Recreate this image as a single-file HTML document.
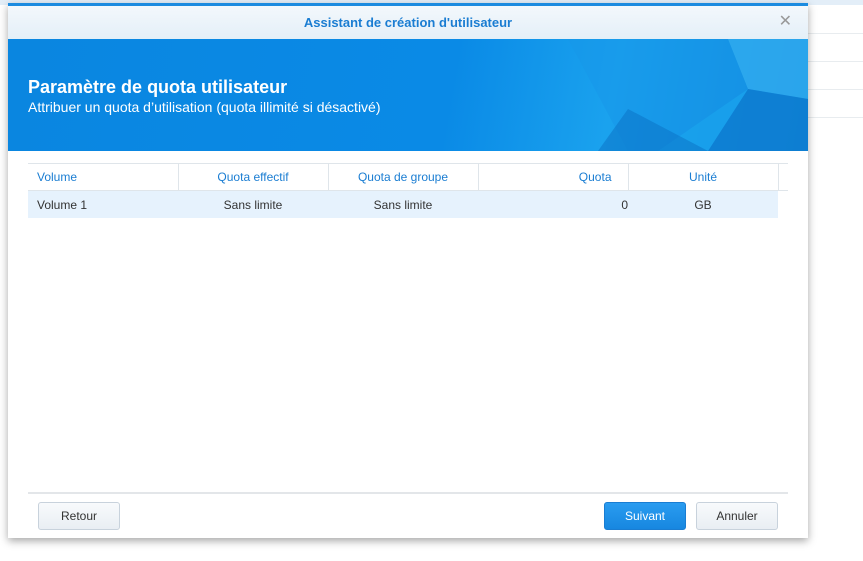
<!DOCTYPE html>
<html><head><style>
body{margin:0;width:863px;height:561px;background:#fff;position:relative;overflow:hidden;font-family:"Liberation Sans",sans-serif;}
.bgl{position:absolute;left:800px;right:0;height:1px;background:#e8ecef}
.dlg{position:absolute;left:8px;top:3px;width:800px;height:535px;background:#fff;box-shadow:0 3px 8px rgba(0,0,0,.35);border-top:3px solid #1b8be0;box-sizing:border-box}
.title{height:33px;background:linear-gradient(#f3f8fc,#e4eff8);text-align:center;line-height:33px;color:#1a7dd2;font-size:13px;font-weight:bold}
.x{position:absolute;right:16px;top:8px;color:#999;font-size:16px;line-height:16px}
.ban{height:112px;background:linear-gradient(100deg,#0a86e0 0%,#0a8ae6 55%,#1aa2ee 75%,#0d7fd6 100%);position:relative;overflow:hidden;color:#fff}
.ban h1{position:absolute;left:20px;top:38px;margin:0;font-size:18px}
.ban p{position:absolute;left:20px;top:60px;margin:0;font-size:14px}
table{position:absolute;left:20px;top:157px;width:760px;border-collapse:collapse;font-size:12px;table-layout:fixed}
th{color:#1a7dd2;font-weight:normal;height:26px;padding:0;border-top:1px solid #dfe5ea;border-right:1px solid #dfe5ea;border-bottom:1px solid #dfe5ea}
td{height:27px;padding:0;color:#333;background:#e6f2fd}
.btn{position:absolute;top:496px;height:28px;border:1px solid #c8d2dc;border-radius:3px;background:linear-gradient(#f8fafc,#e9eef3);font-size:12px;color:#333;text-align:center;line-height:26px;box-sizing:border-box}
</style></head><body>
<div style="position:absolute;left:0;right:0;top:0;height:5px;background:#e3eef8"></div>
<div class="bgl" style="top:33px"></div><div class="bgl" style="top:61px"></div><div class="bgl" style="top:89px"></div><div class="bgl" style="top:117px"></div>
<div class="dlg">
<div class="title">Assistant de création d'utilisateur</div>
<div class="x">✕</div>
<div class="ban">
<svg width="800" height="112" style="position:absolute;left:0;top:0">
<polygon points="560,0 800,0 800,112 620,112" fill="#1898ea" opacity=".6"/>
<polygon points="720,0 800,0 800,60 740,50" fill="#3ab4f2" opacity=".6"/>
<polygon points="740,50 800,60 800,112 700,112" fill="#0c78cc" opacity=".7"/>
<polygon points="740,50 650,112 700,112" fill="#1aa6ee" opacity=".6"/>
<polygon points="620,70 590,112 700,112" fill="#0a70c4" opacity=".5"/>
</svg>
<h1>Paramètre de quota utilisateur</h1>
<p>Attribuer un quota d’utilisation (quota illimité si désactivé)</p>
</div>
<table>
<colgroup><col style="width:150px"><col style="width:150px"><col style="width:150px"><col style="width:150px"><col style="width:150px"><col style="width:10px"></colgroup>
<tr><th style="text-align:left;padding-left:9px">Volume</th><th>Quota effectif</th><th>Quota de groupe</th><th style="text-align:right;padding-right:16px">Quota</th><th>Unité</th><th style="border-right:none"></th></tr>
<tr><td style="padding-left:9px">Volume 1</td><td style="text-align:center">Sans limite</td><td style="text-align:center">Sans limite</td><td style="text-align:right">0</td><td style="text-align:center">GB</td><td style="background:#fff"></td></tr>
</table>
<div style="position:absolute;left:20px;top:486px;width:760px;height:2px;background:#e3e6e9"></div>
<div class="btn" style="left:30px;width:82px">Retour</div>
<div class="btn" style="left:596px;width:82px;background:linear-gradient(#2a9cf0,#1787e0);border-color:#1a7dd2;color:#fff">Suivant</div>
<div class="btn" style="left:688px;width:82px">Annuler</div>
</div>
</body></html>
